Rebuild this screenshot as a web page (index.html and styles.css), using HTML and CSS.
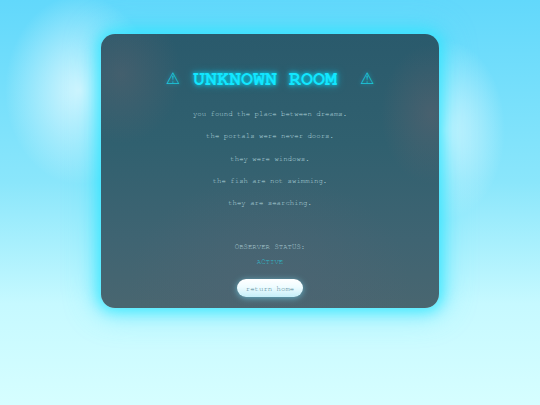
FILE: index.html
```html
<!DOCTYPE html>
<html>
<head>
<meta charset="utf-8">
<link rel="stylesheet" href="styles.css">
</head>
<body>
<div class="page">
  <div class="card">
    <h1 class="title"><span class="warn warn-left">⚠</span><span class="title-text">UNKNOWN ROOM</span><span class="warn warn-right">⚠</span></h1>
    <div class="lines">
      <p class="line">you found the place between dreams.</p>
      <p class="line">the portals were never doors.</p>
      <p class="line">they were windows.</p>
      <p class="line">the fish are not swimming.</p>
      <p class="line">they are searching.</p>
    </div>
    <div class="status">
      <p class="status-label">OBSERVER STATUS:</p>
      <p class="status-value">ACTIVE</p>
    </div>
    <button class="home-btn">return home</button>
  </div>
</div>
</body>
</html>
```
FILE: styles.css
```css
html, body {
  margin: 0;
  padding: 0;
  width: 540px;
  height: 405px;
  overflow: hidden;
}
body {
  font-family: "Nimbus Mono PS", "Nimbus Mono L", "FreeMono", "Courier 10 Pitch", "Courier", "Liberation Mono", monospace;
  background:
    radial-gradient(ellipse 75px 95px at 80px 90px, rgba(230,250,255,0.85), rgba(230,250,255,0) 100%),
    radial-gradient(ellipse 60px 90px at 445px 130px, rgba(230,250,255,0.8), rgba(230,250,255,0) 100%),
    linear-gradient(180deg, #62d8fb 0%, #8ae6fb 45%, #c6f9ff 75%, #d6feff 100%);
}
.page {
  display: flex;
  justify-content: center;
  padding-top: 34px;
}
.card {
  width: 338px;
  height: 274px;
  box-sizing: border-box;
  border-radius: 14px;
  padding: 33px 0 11px;
  display: flex;
  flex-direction: column;
  align-items: center;
  background:
    radial-gradient(ellipse 60px 70px at 20px 40px, rgba(110,100,110,0.35), rgba(110,100,110,0) 100%),
    radial-gradient(ellipse 50px 70px at 330px 80px, rgba(120,100,110,0.35), rgba(120,100,110,0) 100%),
    radial-gradient(ellipse 140px 110px at 169px 250px, rgba(80,100,115,0.6), rgba(80,100,115,0) 100%),
    linear-gradient(180deg, #2a5a6c 0%, #30606f 40%, #3f6472 75%, #496670 100%);
  box-shadow: 0 0 14px 4px rgba(40,230,255,0.75), 0 0 30px 8px rgba(60,225,255,0.35);
}
.title {
  margin: 0;
  height: 24px;
  display: flex;
  align-items: center;
  white-space: nowrap;
}
.title-text {
  font-size: 20px;
  line-height: 24px;
  font-weight: bold;
  color: #12e6ff;
  text-shadow: 0 0 4px rgba(0,230,255,0.9), 0 0 9px rgba(0,220,255,0.6);
}
.warn {
  font-weight: normal;
  font-size: 16px;
  line-height: 24px;
  font-family: "DejaVu Sans", sans-serif;
  color: #1cc8dc;
  text-shadow: 0 0 4px rgba(0,220,255,0.6);
}
.warn-left { margin-right: 13px; }
.warn-right { margin-left: 23px; }
.lines {
  margin-top: 18px;
  display: flex;
  flex-direction: column;
  align-items: center;
  gap: 12.3px;
}
.line {
  margin: 0;
  font-size: 7.35px;
  line-height: 10px;
  color: #b4d6de;
  white-space: nowrap;
}
.status {
  margin-top: 34px;
  display: flex;
  flex-direction: column;
  align-items: center;
  gap: 5px;
}
.status-label, .status-value {
  margin: 0;
  font-size: 7.35px;
  line-height: 10px;
  white-space: nowrap;
}
.status-label { color: #a8c8d0; }
.status-value { color: #30bccc; }
.home-btn {
  margin-top: 12px;
  width: 66px;
  height: 18px;
  border: none;
  border-radius: 9px;
  padding: 0;
  font-family: inherit;
  font-size: 7.35px;
  color: #4a7c8c;
  background: linear-gradient(180deg, #ffffff 0%, #eefcff 45%, #c4eef8 100%);
  box-shadow: 0 1px 6px rgba(120,230,255,0.6);
}
```
